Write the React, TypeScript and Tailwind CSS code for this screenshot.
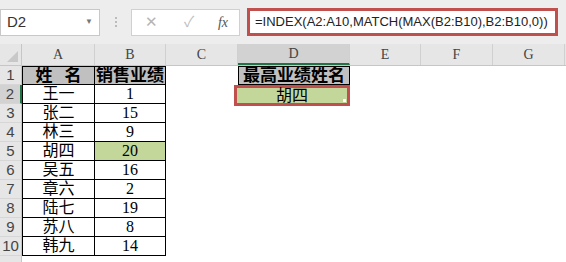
import React from "react";

const cols = ["A", "B", "C", "D", "E", "F", "G"];
const widths = ["w-[73px]", "w-[71px]", "w-[72px]", "w-[112px]", "w-[71px]", "w-[72px]", "w-[72px]"];

const names = ["王一", "张二", "林三", "胡四", "吴五", "章六", "陆七", "苏八", "韩九"];
const scores = [1, 15, 9, 20, 16, 2, 19, 8, 14];

const cellFont = { fontFamily: '"Liberation Serif", "Noto Sans CJK SC", serif' };
const uiFont = { fontFamily: '"Liberation Sans", "Noto Sans CJK SC", sans-serif' };

function Toolbar() {
  return (
    <div className="h-[44px] bg-[#ededed] flex items-center" style={uiFont}>
      <div className="w-[100px] h-[27px] bg-white border border-[#c8c8c8] flex items-center justify-between pl-[6px] pr-[6px]">
        <span className="text-[15px] text-[#333]">D2</span>
        <span className="text-[8px] text-[#777]">▼</span>
      </div>
      <div className="w-[31px] flex flex-col items-center gap-[2px]">
        <span className="w-[2px] h-[2px] bg-[#bbb]" />
        <span className="w-[2px] h-[2px] bg-[#bbb]" />
        <span className="w-[2px] h-[2px] bg-[#bbb]" />
      </div>
      <div className="w-[109px] h-[27px] bg-white border border-[#d0d0d0] flex items-center">
        <span className="w-[38px] text-center text-[15px] text-[#b5b5b5]">✕</span>
        <span className="w-[38px] text-center text-[15px] text-[#c0c0c0]">✓</span>
        <span className="w-[30px] text-center text-[14px] italic text-[#555]" style={{ fontFamily: '"Liberation Serif", serif' }}>
          fx
        </span>
      </div>
      <div className="ml-[7px] w-[311px] h-[28px] bg-white border-[3px] border-[#c0504d] flex items-center pl-[5px]">
        <span className="text-[13px] text-[#222] whitespace-nowrap">=INDEX(A2:A10,MATCH(MAX(B2:B10),B2:B10,0))</span>
      </div>
    </div>
  );
}

function HeaderRow() {
  return (
    <div className="flex h-[22px] bg-[#e6e6e6] border-b border-[#c6c6c6]">
      <div className="w-[22px] border-r border-[#c6c6c6] flex items-end justify-end pr-[3px] pb-[3px]">
        <span className="w-0 h-0 border-l-[11px] border-l-transparent border-b-[11px] border-b-[#c8c8c8]" />
      </div>
      {cols.map((c, i) => (
        <div
          key={c}
          className={`${widths[i]} flex items-center justify-center border-r border-[#d0d0d0] text-[14px] text-[#444] ${
            c === "D" ? "bg-[#d2d2d2] border-b-2 border-b-[#217346]" : ""
          }`}
          style={cellFont}
        >
          {c}
        </div>
      ))}
    </div>
  );
}

function RowHead({ n, active }: { n: number; active?: boolean }) {
  return (
    <div
      className={`w-[22px] shrink-0 flex items-center justify-center text-[15px] text-[#444] border-b border-[#d6d6d6] ${
        active ? "bg-[#d2d2d2] border-r-2 border-r-[#217346]" : "bg-[#e6e6e6] border-r border-r-[#c6c6c6]"
      }`}
      style={uiFont}
    >
      {n}
    </div>
  );
}

function Row({ n, children }: { n: number; children: React.ReactNode }) {
  return (
    <div className="flex h-[19px]">
      <RowHead n={n} active={n === 2} />
      {children}
    </div>
  );
}

export default function App() {
  return (
    <div className="w-[566px] h-[262px] bg-white overflow-hidden text-black">
      <Toolbar />
      <HeaderRow />
      <div style={cellFont}>
        <Row n={1}>
          <div className="w-[73px] bg-[#c0c0c0] border border-black flex items-center justify-center text-[17px] font-bold">
            姓<span className="w-[12px]" />名
          </div>
          <div className="w-[71px] bg-[#c0c0c0] border-y border-r border-black flex items-center justify-center text-[17px] font-bold">
            销售业绩
          </div>
          <div className="w-[72px]" />
          <div className="w-[112px] bg-[#c0c0c0] border border-black flex items-center justify-center text-[17px] font-bold">
            最高业绩姓名
          </div>
        </Row>
        {names.map((name, i) => {
          const n = i + 2;
          return (
            <Row key={n} n={n}>
              <div className="w-[73px] border-x border-b border-black flex items-center justify-center text-[16px]">{name}</div>
              <div
                className={`w-[71px] border-r border-b border-black flex items-center justify-center text-[16px] ${
                  n === 5 ? "bg-[#c4d79b]" : ""
                }`}
              >
                {scores[i]}
              </div>
              <div className="w-[72px]" />
              {n === 2 ? (
                <div className="w-[116px] -ml-[4px] h-[21px] border-[3px] border-[#c0504d] bg-[#c4d79b] flex items-center justify-center text-[16px] relative z-10">
                  胡四
                  <span className="absolute right-[1px] bottom-[1px] w-[3px] h-[3px] bg-white" />
                </div>
              ) : null}
            </Row>
          );
        })}
        <div className="flex h-[6px]">
          <div className="w-[22px] bg-[#e6e6e6] border-r border-[#c6c6c6]" />
        </div>
      </div>
    </div>
  );
}
